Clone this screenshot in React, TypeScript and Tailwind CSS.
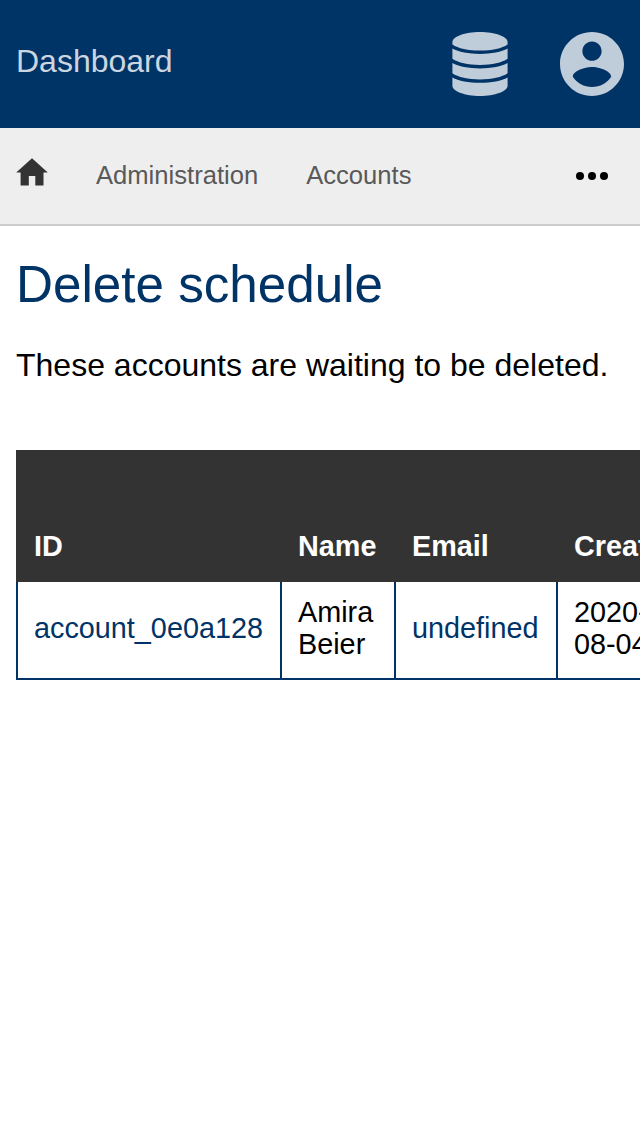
import React from "react";

function DatabaseIcon() {
  return (
    <svg viewBox="0 0 56 64" className="h-16 w-14" fill="currentColor">
      <path d="M28 0C43 0 55.600 4.600 55.600 10v2.400C50 16.300 40 18.600 28 18.600S6 16.300 .4 12.400V10C.4 4.600 13 0 28 0Z" />
      <path d="M.4 16.600C6.500 20 16.500 22 28 22S49.500 20 55.600 16.600v10.200C50 30.700 40 33 28 33S6 30.700 .4 26.800Z" />
      <path d="M.4 31C6.500 34.400 16.500 36.400 28 36.400S49.500 34.400 55.600 31v10.200C50 45.100 40 47.400 28 47.400S6 45.100 .4 41.200Z" />
      <path d="M.4 45.400C6.500 48.800 16.500 50.800 28 50.800S49.500 48.800 55.600 45.400v8.400C55.600 59.400 43 64 28 64S.4 59.400 .4 53.800Z" />
    </svg>
  );
}

function AccountIcon() {
  return (
    <svg viewBox="2 2 20 20" className="size-16" fill="currentColor">
      <path d="M12 2C6.480 2 2 6.480 2 12s4.480 10 10 10 10-4.480 10-10S17.520 2 12 2zm0 3c1.660 0 3 1.340 3 3s-1.340 3-3 3-3-1.340-3-3 1.340-3 3-3zm0 14.200c-2.500 0-4.710-1.280-6-3.220.030-1.990 4-3.080 6-3.080 1.990 0 5.970 1.090 6 3.080-1.290 1.940-3.500 3.220-6 3.220z" />
    </svg>
  );
}

function HomeIcon() {
  return (
    <svg viewBox="0 0 32 28" className="h-7 w-8" fill="currentColor">
      <path d="M16 .2 31.800 14.500H27.500V27.500H19.300V18H12.800V27.500H4.600V14.500H.2Z" />
    </svg>
  );
}

const columns = ["ID", "Name", "Email", "Created"];

export default function App() {
  return (
    <div className="flex h-[1136px] w-[640px] flex-col overflow-hidden bg-white font-['Liberation_Sans',Arial,sans-serif] text-black">
      <header className="flex h-32 shrink-0 items-center justify-between bg-[#003366] px-4 text-[#bfccd9]">
        <a className="pb-1.5 text-[32px] leading-[37px] text-[#ccd6e0]">Dashboard</a>
        <div className="flex gap-[52px]">
          <DatabaseIcon />
          <AccountIcon />
        </div>
      </header>

      <nav className="flex h-[98px] shrink-0 items-center border-b-2 border-[#cccccc] bg-[#eeeeee] pr-8 pl-4 text-[25.6px] leading-[30px] text-[#595959]">
        <a className="mr-12 -mt-2 text-[#333333]"><HomeIcon /></a>
        <a className="mr-12 pb-0.5">Administration</a>
        <a className="pb-0.5">Accounts</a>
        <svg viewBox="0 0 32 8" className="ml-auto h-2 w-8 text-black" fill="currentColor">
          <circle cx="4" cy="4" r="4" />
          <circle cx="16" cy="4" r="4" />
          <circle cx="28" cy="4" r="4" />
        </svg>
      </nav>

      <main className="px-4 pt-[30px]">
        <h1 className="text-[51.2px] leading-[58px] text-[#003366]">Delete schedule</h1>
        <p className="mt-[33px] text-[32px] leading-[37px]">These accounts are waiting to be deleted.</p>
        <table className="mt-[66px] w-[706px] table-fixed border-collapse text-left text-[28.8px] leading-8">
          <colgroup>
            <col className="w-[264px]" />
            <col className="w-[114px]" />
            <col className="w-[162px]" />
            <col />
          </colgroup>
          <thead>
            <tr className="h-[130px] bg-[#333333] text-white">
              {columns.map((name) => (
                <th key={name} className="border-2 border-[#333333] px-4 pb-[18px] align-bottom font-bold">{name}</th>
              ))}
            </tr>
          </thead>
          <tbody>
            <tr className="h-[98px]">
              <td className="border-2 border-[#003366] px-4 pb-1 text-[#003366]">account_0e0a128</td>
              <td className="border-2 border-[#003366] px-4 pb-1">Amira Beier</td>
              <td className="border-2 border-[#003366] px-4 pb-1 text-[#003366]">undefined</td>
              <td className="border-2 border-[#003366] px-4 pb-1">2020-<br />08-04</td>
            </tr>
          </tbody>
        </table>
      </main>
    </div>
  );
}
